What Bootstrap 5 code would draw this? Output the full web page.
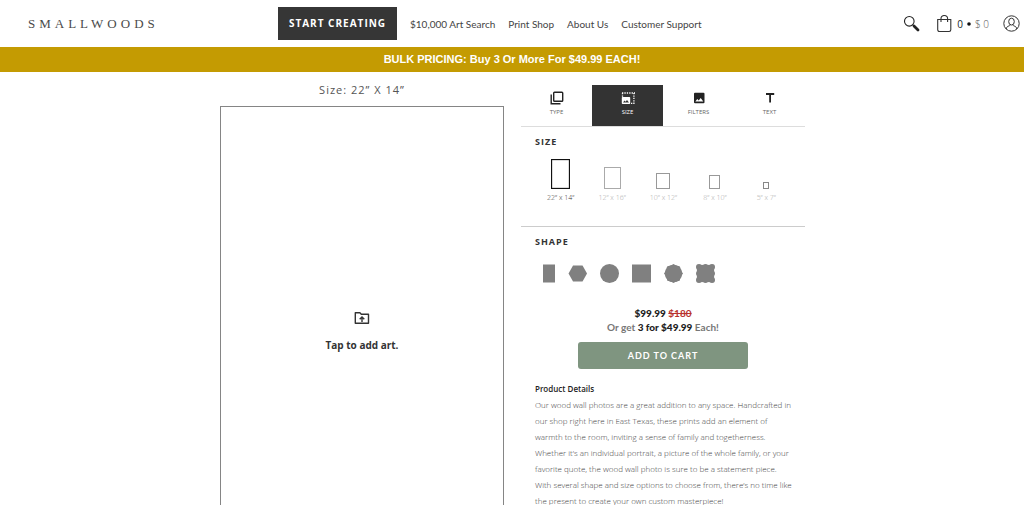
<!DOCTYPE html>
<html lang="en">
<head>
<meta charset="utf-8">
<meta name="viewport" content="width=device-width, initial-scale=1">
<title>Smallwoods - Create Your Wood Wall Photo</title>
<link rel="stylesheet" href="https://cdn.jsdelivr.net/npm/bootstrap@5.3.0/dist/css/bootstrap.min.css">
<style>
body { font-family: Lato, "Open Sans", sans-serif; font-size: 10px; line-height: 14px; color: #444; background: #fff; }
button { border: 0; background: none; padding: 0; color: inherit; font: inherit; }
svg { display: block; }
a { color: inherit; text-decoration: none; }
.site-head { display: grid; grid-template-columns: 278px 1fr auto; height: 47px; padding-right: 4px; }
.brand-name { font: 13px/18px "Liberation Serif", serif; letter-spacing: 4px; color: #4a4a4a; padding-left: 28px; }
.start-btn { background: #363636; color: #fff; font: 700 10px/33px "Open Sans", sans-serif; letter-spacing: 1px; width: 119px; }
.site-nav { gap: 13px; }
.cart-sum { font: 300 10px/14px "Open Sans", sans-serif; color: #555; margin-right: 14px; }
.promo { background: #c49b02; color: #fff; font: 700 11px/25px "Liberation Sans", sans-serif; }
.workspace { max-width: 588px; padding: 0 1px 0 2px; gap: 17px; display: grid; grid-template-columns: 1fr 1fr; }
.canvas-title { font: 11px/14px "Open Sans", sans-serif; letter-spacing: 1px; color: #555; margin: 11px 0 9px; }
.art-drop { width: 100%; aspect-ratio: 14 / 22; border: 1px solid #858585; padding-top: 4px; font: 700 10px/14px "Open Sans", sans-serif; color: #333; }
.art-drop svg { margin-bottom: 13px; }
.tabs { margin-top: 13px; border-bottom: 1px solid #ddd; }
.tabs button { flex: 1 1 0; height: 41px; padding-bottom: 3px; font: 6px/10px "Open Sans", sans-serif; color: #666; }
.tabs button.active { background: #333; color: #fff; }
.tabs svg { margin: 0 auto 2px; }
.tabs .glyph { color: #222; }
.tabs .active .glyph { color: #fff; }
.panel-block { padding: 0 13px 0 14px; }
.panel-block h2 { font: 700 9px/13px "Open Sans", sans-serif; letter-spacing: 1px; color: #333; margin: 0; }
.sizes { display: grid; grid-template-columns: repeat(5, 1fr); margin-top: 11px; padding-bottom: 23px; }
.sizes button { font: 300 7px/10px "Open Sans", sans-serif; color: #aaa; display: flex; flex-direction: column; align-items: center; justify-content: flex-end; gap: 4px; }
.sizes .active { color: #333; }
.rule { border-top: 1px solid #ccc; }
.shapes { gap: 13px; padding: 16px 8px 0; color: #808080; }
.price { font-weight: 700; margin-top: 23px; color: #777; }
.price b { color: #222; }
.price del { color: #b8322e; }
.cart-btn { background: #7f9580; color: #fff; border-radius: 3px; width: 60%; font: 700 9px/27px Lato, sans-serif; letter-spacing: 1px; }
.details h3 { font: 600 8px/16px "Open Sans", sans-serif; margin: 0; color: #222; }
.details p { font: 300 8px/16px "Open Sans", sans-serif; color: #444; }
</style>
</head>
<body>
<div class="vh-100 d-flex flex-column overflow-hidden">
  <header class="site-head align-items-center flex-shrink-0">
    <a href="#" class="brand-name">SMALLWOODS</a>
    <nav class="site-nav d-flex align-items-center text-nowrap">
      <button class="start-btn" type="button">START CREATING</button>
      <a href="#">$10,000 Art Search</a>
      <a href="#">Print Shop</a>
      <a href="#">About Us</a>
      <a href="#">Customer Support</a>
    </nav>
    <div class="d-flex align-items-center">
      <button type="button" aria-label="Search" class="me-3">
        <svg width="17" height="17" viewBox="0 0 17 17" fill="none" stroke="#222"><circle cx="6.3" cy="6.3" r="4.8" stroke-width="1.1"/><path d="M9.8 9.8l1.6 1.6" stroke-width="1.2"/><path d="M11 11l4 4" stroke-width="2.8" stroke-linecap="round"/></svg>
      </button>
      <a href="#" class="cart-sum d-flex align-items-center">
        <svg width="17" height="18" viewBox="0 0 17 18" fill="none" stroke="#333"><path d="M1.7 4.5h13.1v10.3a1.7 1.7 0 0 1-1.7 1.7H3.4a1.7 1.7 0 0 1-1.7-1.7zM5 7V3.8a3.3 3.3 0 0 1 6.6 0V7" stroke-width="1.1"/></svg>
        <span class="fw-normal text-dark px-1">0</span>
        <svg width="4" height="4" viewBox="0 0 4 4" fill="#111"><circle cx="2" cy="2" r="1.8"/></svg>
        <span class="ps-1">$ 0</span>
      </a>
      <a href="#" aria-label="Account">
        <svg width="17" height="17" viewBox="0 0 17 17" fill="none" stroke="#333"><circle cx="8.5" cy="8.5" r="7.7"/><ellipse cx="8.5" cy="6.6" rx="2.8" ry="3.4"/><path d="M3.2 14c.3-2.2 1.4-2.6 3.2-3.2.5-.2.6-.7.5-1.1M13.8 14c-.3-2.2-1.4-2.6-3.2-3.2-.5-.2-.6-.7-.5-1.1"/></svg>
      </a>
    </div>
  </header>
  <div class="promo text-center flex-shrink-0">BULK PRICING: Buy 3 Or More For $49.99 EACH!</div>

  <main class="workspace w-100 mx-auto">
    <section>
      <div class="canvas-title text-center">Size: 22” X 14”</div>
      <button type="button" class="art-drop d-flex flex-column align-items-center justify-content-center">
        <svg width="16" height="14" viewBox="0 0 16 14" fill="none" stroke="#333" stroke-width="1.4"><path d="M1.3 1.8h4.6l1.4 1.5h7.2v9H1.3z" stroke-linejoin="round"/><path d="M8 11V6.3M5.7 8.2L8 5.9l2.3 2.3"/></svg>
        Tap to add art.
      </button>
    </section>

    <section>
      <div class="tabs d-flex">
        <button type="button">
          <svg class="glyph" width="14" height="14" viewBox="0 0 14 14" fill="none" stroke="currentColor" stroke-width="1.4"><rect x="3.7" y="1.2" width="9" height="9" rx=".8"/><path d="M1.2 3.5v9.2h9.3"/></svg>TYPE
        </button>
        <button type="button" class="active">
          <svg class="glyph" width="14" height="14" viewBox="0 0 14 14"><path d="M1 2h13M12.9 2v11M10 12.3h3.5M1.5 2v4" fill="none" stroke="currentColor" stroke-width="1.3" stroke-dasharray="1.3 1.1"/><path fill="currentColor" fill-rule="evenodd" d="M1.6 6h6.8a.8.8 0 0 1 .8.8v5.4a.8.8 0 0 1-.8.8H1.6a.8.8 0 0 1-.8-.8V6.8a.8.8 0 0 1 .8-.8zM2 11.6h6L6 9l-1.5 1.8-1-1.2z"/></svg>SIZE
        </button>
        <button type="button">
          <svg class="glyph" width="14" height="14" viewBox="0 0 14 14"><path fill="currentColor" fill-rule="evenodd" d="M3 1.8h8.500a1 1 0 0 1 1 1v8.500a1 1 0 0 1-1 1H3a1 1 0 0 1-1-1V2.800a1 1 0 0 1 1-1zM3.300 10.500h8L8.700 7l-2 2.600-1.400-1.700z"/></svg>FILTERS
        </button>
        <button type="button">
          <svg class="glyph" width="14" height="14" viewBox="0 0 14 14" fill="none" stroke="currentColor" stroke-width="1.8"><path d="M3 3h8.200M7.100 3v8.500"/></svg>TEXT
        </button>
      </div>

      <div class="panel-block pt-2">
        <h2>SIZE</h2>
        <div class="sizes">
          <button type="button" class="active"><svg width="19" height="30"><rect x=".5" y=".5" width="18" height="29" fill="none" stroke="#111" stroke-width="1.3"/></svg>22” x 14”</button>
          <button type="button"><svg width="17" height="22"><rect x=".5" y=".5" width="16" height="21" fill="none" stroke="#aaa"/></svg>12” x 16”</button>
          <button type="button"><svg width="14" height="16"><rect x=".5" y=".5" width="13" height="15" fill="none" stroke="#999"/></svg>10” x 12”</button>
          <button type="button"><svg width="11" height="14"><rect x=".5" y=".5" width="10" height="13" fill="none" stroke="#999"/></svg>8” x 10”</button>
          <button type="button"><svg width="6" height="7"><rect x=".5" y=".5" width="5" height="6" fill="none" stroke="#888"/></svg>5” x 7”</button>
        </div>
      </div>
      <div class="rule"></div>

      <div class="panel-block pt-2">
        <h2>SHAPE</h2>
        <div class="shapes d-flex">
          <button type="button" aria-label="Rectangle"><svg width="12" height="19" fill="currentColor"><rect y=".5" width="12" height="18"/></svg></button>
          <button type="button" aria-label="Hexagon"><svg width="19" height="19" fill="currentColor"><path d="M5 1.500h9.500l4.500 8-4.500 8H5l-4.500-8z"/></svg></button>
          <button type="button" aria-label="Circle"><svg width="19" height="19" fill="currentColor"><circle cx="9.500" cy="9.500" r="9.500"/></svg></button>
          <button type="button" aria-label="Square"><svg width="19" height="19" fill="currentColor"><rect y=".5" width="19" height="18"/></svg></button>
          <button type="button" aria-label="Scalloped octagon"><svg width="19" height="19" fill="currentColor"><path d="M9.500 0q2 1.900 6.200 2.300q.2 4.200 3.300 7.200q-3.100 3-3.300 7.200q-4.200.4-6.200 2.300q-2-1.900-6.200-2.300q-.2-4.200-3.300-7.200q3.100-3 3.300-7.200q4.200-.4 6.200-2.300z"/><circle cx="9.500" cy="9.500" r="8.700"/></svg></button>
          <button type="button" aria-label="Ornate square"><svg width="19" height="19" fill="currentColor"><rect x=".9" y=".9" width="17.200" height="17.200"/><circle cx="3" cy="3" r="3"/><circle cx="16" cy="3" r="3"/><circle cx="3" cy="16" r="3"/><circle cx="16" cy="16" r="3"/><path d="M7 1q2.500-2 5 0v17q-2.500 2-5 0zM1 7q-2 2.500 0 5h17q2-2.500 0-5z"/></svg></button>
        </div>
      </div>

      <div class="price text-center mb-2">
        <div><b>$99.99</b> <del>$180</del></div>
        <div>Or get <b>3 for $49.99</b> Each!</div>
      </div>
      <button type="button" class="cart-btn d-block mx-auto">ADD TO CART</button>

      <div class="panel-block details">
        <h3 class="mt-2 pt-1">Product Details</h3>
        <p>Our wood wall photos are a great addition to any space. Handcrafted in<br>
        our shop right here in East Texas, these prints add an element of<br>
        warmth to the room, inviting a sense of family and togetherness.<br>
        Whether it’s an individual portrait, a picture of the whole family, or your<br>
        favorite quote, the wood wall photo is sure to be a statement piece.<br>
        With several shape and size options to choose from, there’s no time like<br>
        the present to create your own custom masterpiece!</p>
      </div>
    </section>
  </main>
</div>
<script src="https://cdn.jsdelivr.net/npm/bootstrap@5.3.0/dist/js/bootstrap.bundle.min.js"></script>
</body>
</html>
